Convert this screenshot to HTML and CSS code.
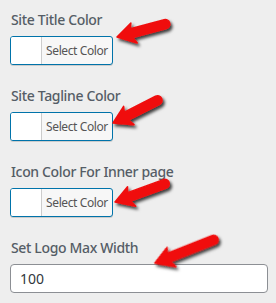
FILE: index.html
```html
<!DOCTYPE html>
<html lang="en">
<head>
<meta charset="UTF-8" />
<title>Header Settings</title>
<link rel="stylesheet" href="styles.css">
</head>
<body>
  <div class="panel">
    <div class="field">
      <label class="field-label">Site Title Color</label>
      <button class="color-btn"><span class="swatch"></span><span class="color-text">Select Color</span></button>
    </div>
    <div class="field">
      <label class="field-label">Site Tagline Color</label>
      <button class="color-btn"><span class="swatch"></span><span class="color-text">Select Color</span></button>
    </div>
    <div class="field">
      <label class="field-label">Icon Color For Inner page</label>
      <button class="color-btn"><span class="swatch"></span><span class="color-text">Select Color</span></button>
    </div>
    <div class="field">
      <label class="field-label">Set Logo Max Width</label>
      <input class="text-input" type="text" value="100">
    </div>
  </div>

  <!-- red pointer arrows drawn over the screenshot -->
  <svg class="arrows" width="276" height="303" viewBox="0 0 276 303">
    <defs>
      <filter id="shadow" x="-30%" y="-30%" width="160%" height="160%">
        <feDropShadow dx="2" dy="2.5" stdDeviation="1.4" flood-color="#000" flood-opacity="0.75"/>
      </filter>
    </defs>
    <g class="arrow" filter="url(#shadow)">
      <path transform="translate(117 37) rotate(-15)" d="M0 0 L17 -10 L15 -4.5 L50 -4.5 A4.5 4.5 0 0 1 50 4.5 L15 4.5 L18 11 Z"/>
      <path transform="translate(113 123) rotate(-27)" d="M0 0 L17 -10 L15 -4.5 L50 -4.5 A4.5 4.5 0 0 1 50 4.5 L15 4.5 L18 11 Z"/>
      <path transform="translate(115 202) rotate(-20)" d="M0 0 L17 -10 L15 -4.5 L53 -4.5 A4.5 4.5 0 0 1 53 4.5 L15 4.5 L18 11 Z"/>
      <path transform="translate(155 263) rotate(-21.6)" d="M0 0 L17 -10 L15 -4.5 L63 -4.5 A4.5 4.5 0 0 1 63 4.5 L15 4.5 L18 11 Z"/>
    </g>
  </svg>
</body>
</html>
```

FILE: styles.css
```css
body {
  margin: 0;
  background: #eeeeee;
  color: #555d66;
  font-family: "Noto Sans", "Open Sans", sans-serif;
  position: relative;
  width: 276px;
  height: 303px;
  overflow: hidden;
}
.panel {
  padding: 10px 8px 0 10px;
  display: flex;
  flex-direction: column;
}
.field {
  display: flex;
  flex-direction: column;
  align-items: flex-start;
  margin-bottom: 21px;
}
.field-label {
  font-size: 14px;
  font-weight: 500;
  letter-spacing: -0.35px;
  line-height: 20px;
  margin-bottom: 6px;
  padding-left: 1px;
}
.color-btn {
  display: flex;
  align-items: stretch;
  width: 103px;
  height: 29px;
  padding: 0;
  border: 1px solid #0073aa;
  border-radius: 3px;
  background: #f7f7f7;
  overflow: hidden;
  box-shadow: 0 1px 0 #ccc;
  font-family: inherit;
}
.swatch {
  width: 30px;
  background: #ffffff;
  border-right: 1px solid #cccccc;
}
.color-text {
  flex: 1;
  display: flex;
  align-items: center;
  justify-content: center;
  font-size: 12px;
  letter-spacing: -0.4px;
  color: #555555;
}
.text-input {
  box-sizing: border-box;
  width: 258px;
  height: 29px;
  padding: 0 9px;
  border: 1px solid #8c8f94;
  border-radius: 4px;
  background: #ffffff;
  color: #32373c;
  font-family: inherit;
  font-size: 14px;
}
.arrows {
  position: absolute;
  left: 0;
  top: 0;
  pointer-events: none;
}
.arrow path {
  fill: #f00d0d;
  stroke: #f00d0d;
  stroke-width: 1.5;
  stroke-linejoin: round;
}
```
